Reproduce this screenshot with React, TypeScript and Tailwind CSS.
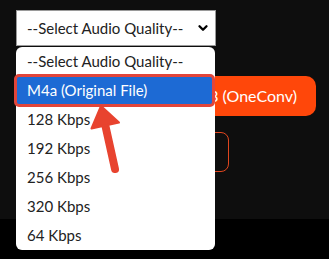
import { ChevronDown } from 'lucide-react'

const options = [
  '--Select Audio Quality--',
  'M4a (Original File)',
  '128 Kbps',
  '192 Kbps',
  '256 Kbps',
  '320 Kbps',
  '64 Kbps',
]

export default function App() {
  return (
    <div className="relative min-h-screen w-[329px] bg-black overflow-hidden" style={{ fontFamily: 'Lato, "Noto Sans", sans-serif' }}>
      {/* page section */}
      <div className="h-[219px] bg-[#0e0e0e] pt-[10px] pl-4">
        <div className="flex h-9 w-[200px] items-center justify-between border border-[#9a9a9a] bg-white pl-[10px] pr-[5px] text-[15px] text-[#222]">
          <span>--Select Audio Quality--</span>
          <ChevronDown className="h-[14px] w-[14px] text-black" strokeWidth={4} />
        </div>

        <div className="mt-[30px] flex h-10 w-[300px] items-center justify-end rounded-[10px] bg-[#ff470a] pr-[19px] text-[16px] text-white">
          3 (OneConv)
        </div>

        <div className="mt-4 h-10 w-[213px] rounded-lg border-[1.5px] border-[#e0461e]" />
      </div>

      {/* open dropdown list */}
      <div className="absolute left-4 top-[47px] w-[199px] overflow-hidden rounded-md bg-white text-[15px] text-[#222]">
        {options.map((o, i) => (
          <div
            key={o}
            className={`flex items-center ${i === 1 ? 'mx-px my-[1px] h-[27px] bg-[#1d6ad4] pl-[10px] text-white' : 'h-[29px] pl-[11px]'}`}
          >
            {o}
          </div>
        ))}
      </div>

      {/* highlight outline */}
      <div className="absolute left-[14px] top-[74px] h-[33px] w-[201px] rounded-[5px] border-[3px] border-[#e2453a]" />

      {/* arrow */}
      <svg className="absolute inset-0" width="329" height="259" viewBox="0 0 329 259">
        <line x1="105" y1="124" x2="115" y2="169" stroke="#e8432f" strokeWidth="8" strokeLinecap="round" />
        <polygon points="101,106 119,122.5 91.5,128.5" fill="#e8432f" stroke="#e8432f" strokeWidth="2" strokeLinejoin="round" />
      </svg>
    </div>
  )
}
